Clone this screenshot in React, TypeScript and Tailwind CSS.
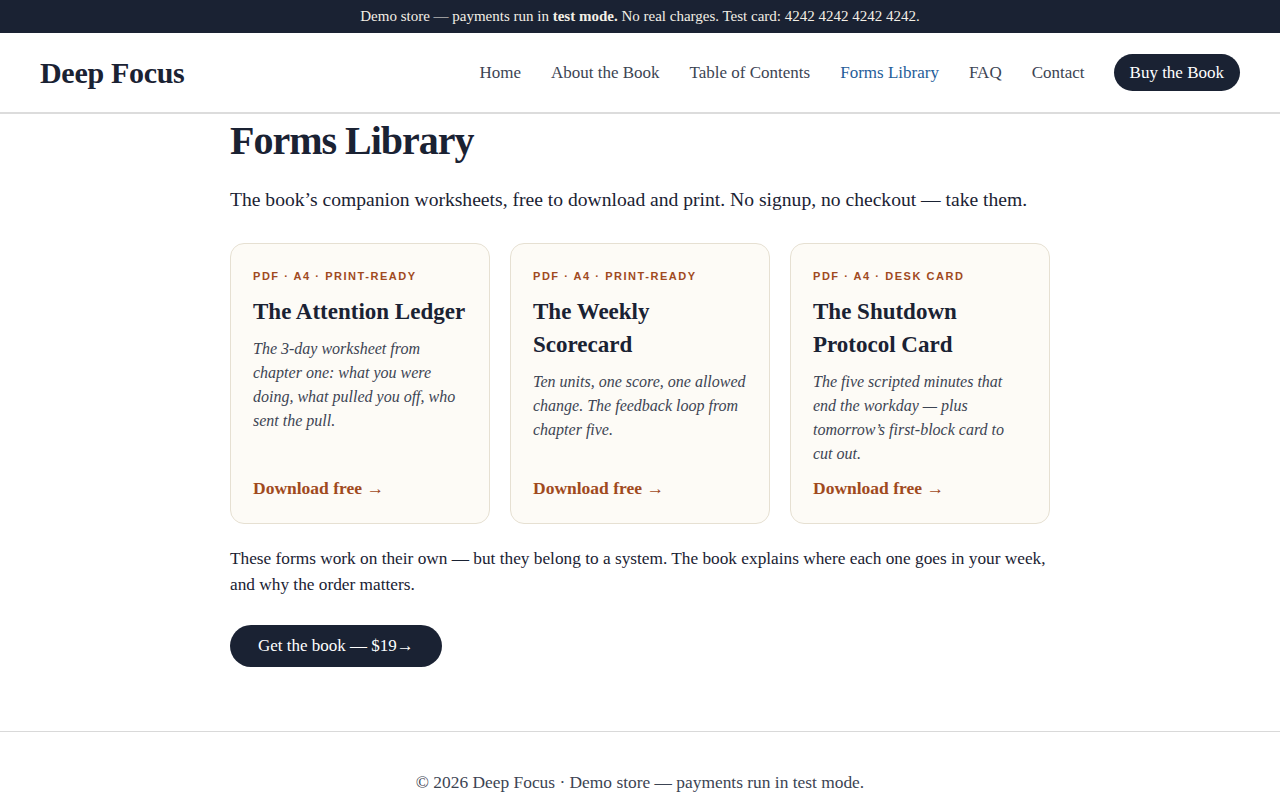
const serif = { fontFamily: '"Liberation Serif", "DejaVu Serif", serif' };

const navLinks = ["Home", "About the Book", "Table of Contents", "Forms Library", "FAQ", "Contact"];

const forms = [
    {
        tag: "PDF · A4 · PRINT-READY",
        title: "The Attention Ledger",
        desc: "The 3-day worksheet from chapter one: what you were doing, what pulled you off, who sent the pull.",
    },
    {
        tag: "PDF · A4 · PRINT-READY",
        title: "The Weekly Scorecard",
        desc: "Ten units, one score, one allowed change. The feedback loop from chapter five.",
    },
    {
        tag: "PDF · A4 · DESK CARD",
        title: "The Shutdown Protocol Card",
        desc: "The five scripted minutes that end the workday — plus tomorrow’s first-block card to cut out.",
    },
];

export default function App() {
    return (
        <div className="min-h-screen bg-white text-[#1a2233] flex flex-col" style={serif}>
            {/* Demo banner */}
            <div className="h-[33px] bg-[#1a2233] text-[#f3efe6] text-[15px] flex items-center justify-center">
                <span>Demo store — payments run in <b>test mode.</b> No real charges. Test card: 4242 4242 4242 4242.</span>
            </div>

            {/* Header */}
            <header className="h-[81px] flex items-center justify-between px-10 border-b-2 border-[#dcdcdc]">
                <div className="text-[30px] font-bold tracking-[-0.01em]">Deep Focus</div>
                <nav className="flex items-center">
                    {navLinks.map(l => (
                        <a key={l} className={`text-[17px] ${l === "Contact" ? "mr-[29px]" : "mr-[30px]"} ${l === "Forms Library" ? "text-[#1f5d99]" : "text-[#3c4453]"}`}>{l}</a>
                    ))}
                    <button className="bg-[#1a2233] text-white text-[17px] h-[37px] px-4 rounded-full">Buy the Book</button>
                </nav>
            </header>

            {/* Main */}
            <main className="w-[820px] mx-auto pt-[3px] pb-16">
                <h1 className="text-[40px] font-bold leading-[1.2] tracking-tight">Forms Library</h1>
                <p className="mt-[20px] text-[19.6px] leading-[30px]">The book’s companion worksheets, free to download and print. No signup, no checkout — take them.</p>

                <div className="grid grid-cols-3 gap-5 mt-[28px]">
                    {forms.map(f => (
                        <div key={f.title} className="h-[281px] bg-[#fdfbf6] border border-[#e6e0d2] rounded-[14px] px-[22px] pt-[24px] pb-[24px] flex flex-col">
                            <div className="text-[11px] font-bold tracking-[0.14em] text-[#a04a1e]" style={{ fontFamily: '"Liberation Sans", Arial, sans-serif' }}>{f.tag}</div>
                            <h2 className="mt-[10px] text-[23px] font-bold leading-[33px]">{f.title}</h2>
                            <p className="mt-[9px] text-[16px] italic leading-[24px] text-[#3c4453]">{f.desc}</p>
                            <a className="mt-auto mb-[-2px] text-[17.5px] font-bold text-[#a04a1e]">Download free →</a>
                        </div>
                    ))}
                </div>

                <p className="mt-[22px] text-[17.3px] leading-[26px]">These forms work on their own — but they belong to a system. The book explains where each one goes in your week, and why the order matters.</p>

                <button className="mt-[27px] h-[42px] px-7 rounded-full bg-[#1a2233] text-white text-[17px]">Get the book — $19→</button>
            </main>

            {/* Footer */}
            <footer className="border-t border-[#d9d9d9] h-[100px] flex items-center justify-center">
                <p className="text-[17.4px] text-[#3c4453] mt-[2px]">© 2026 Deep Focus · Demo store — payments run in test mode.</p>
            </footer>
        </div>
    );
}
